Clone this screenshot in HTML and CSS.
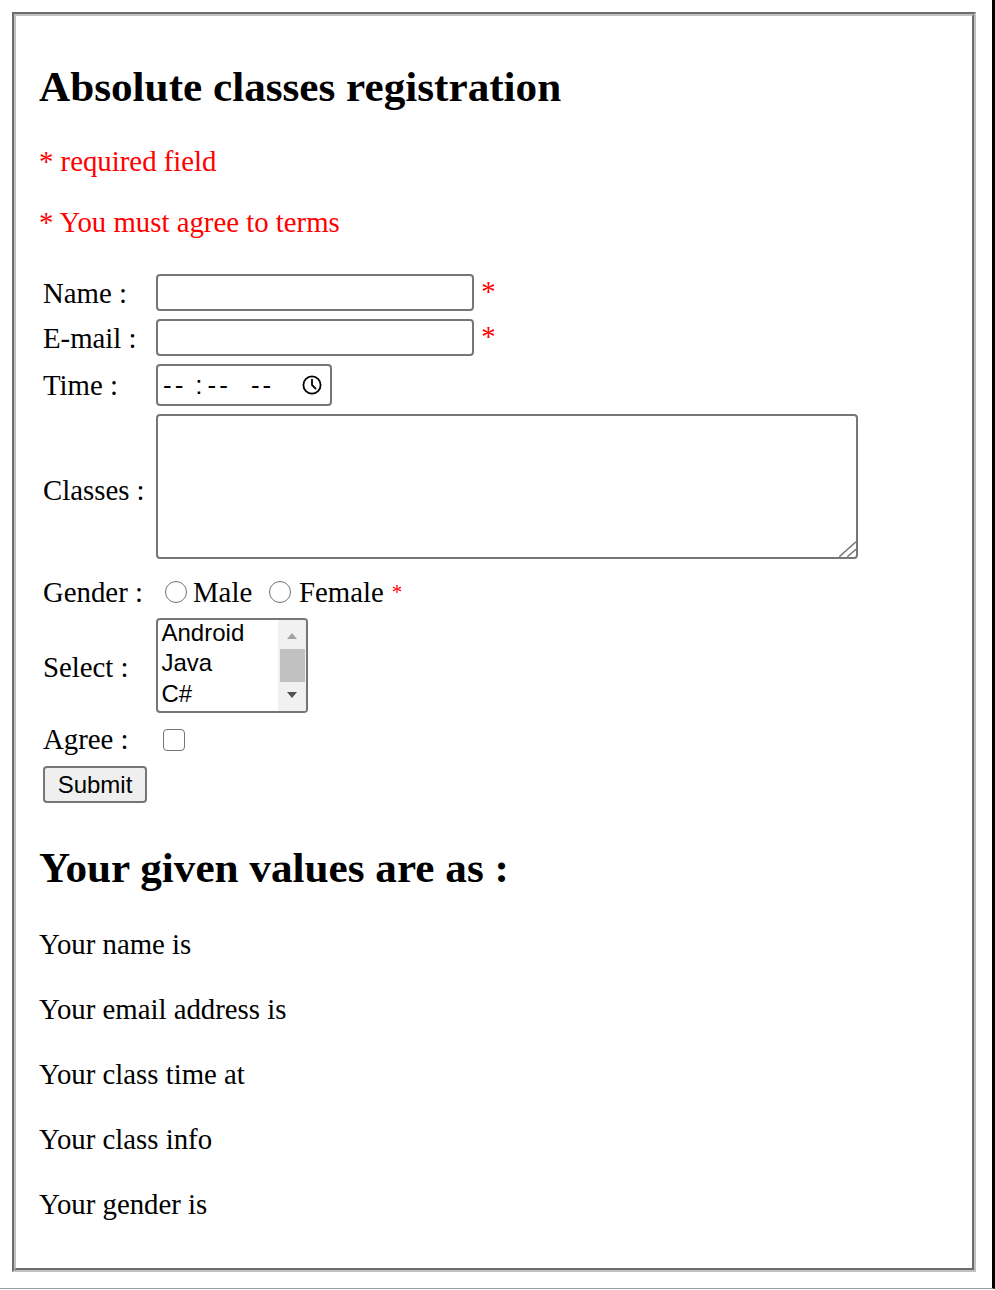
FILE: index.html
```html
<!DOCTYPE html>
<html lang="en">
<head>
<meta charset="utf-8">
<title>Absolute classes registration</title>
<link rel="stylesheet" href="styles.css">
</head>
<body>
<div class="frame">
  <div class="box">
    <h2 class="title">Absolute classes registration</h2>
    <p class="err note1">* required field</p>
    <p class="err note2">* You must agree to terms</p>

    <form class="form" onsubmit="return false">
      <div class="row">
        <label class="lbl">Name :</label>
        <div class="ctl"><input class="txt" type="text"> <span class="req">*</span></div>
      </div>
      <div class="row">
        <label class="lbl">E-mail :</label>
        <div class="ctl"><input class="txt" type="text"> <span class="req">*</span></div>
      </div>
      <div class="row">
        <label class="lbl">Time :</label>
        <div class="ctl">
          <div class="time">
            <span class="seg">--</span><span class="colon">:</span><span class="seg seg2">--</span><span class="seg seg3">--</span>
            <svg class="clock" width="20" height="20" viewBox="0 0 20 20" aria-hidden="true">
              <circle cx="10" cy="10" r="8.6" fill="none" stroke="#000" stroke-width="1.8"/>
              <path d="M10 4.6 V10 L13.6 13.6" fill="none" stroke="#000" stroke-width="1.8" stroke-linecap="round" stroke-linejoin="round"/>
            </svg>
          </div>
        </div>
      </div>
      <div class="row">
        <label class="lbl">Classes :</label>
        <div class="ctl tawrap">
          <textarea class="ta"></textarea>
          <svg class="grip" width="20" height="20" viewBox="0 0 20 20" aria-hidden="true">
            <path d="M18 2.7 L1.3 17.7 M18 10.3 L9.3 17.7" stroke="#707070" stroke-width="1.5" fill="none"/>
          </svg>
        </div>
      </div>
      <div class="row rowg">
        <label class="lbl">Gender :</label>
        <div class="ctl gender">
          <input class="radio r1" type="radio" name="g"><span>Male</span>
          <input class="radio r2" type="radio" name="g"><span>Female</span>
          <span class="req small">*</span>
        </div>
      </div>
      <div class="row">
        <label class="lbl">Select :</label>
        <div class="ctl">
          <div class="list">
            <div class="opts">
              <div class="opt">Android</div>
              <div class="opt">Java</div>
              <div class="opt">C#</div>
            </div>
            <div class="sb">
              <span class="up"></span>
              <span class="thumb"></span>
              <span class="down"></span>
            </div>
          </div>
        </div>
      </div>
      <div class="row">
        <label class="lbl">Agree :</label>
        <div class="ctl"><input class="chk" type="checkbox"></div>
      </div>
      <div class="row rows">
        <button class="submit" type="button">Submit</button>
      </div>
    </form>

    <h2 class="title title2">Your given values are as :</h2>
    <p class="out out1">Your name is</p>
    <p class="out">Your email address is</p>
    <p class="out">Your class time at</p>
    <p class="out">Your class info</p>
    <p class="out">Your gender is</p>
  </div>
</div>
</body>
</html>
```

FILE: styles.css
```css
html, body {
  margin: 0;
  padding: 0;
  background: #fff;
}

body {
  font-family: "Liberation Serif", "Times New Roman", serif;
  font-size: 28.8px;
  line-height: 32px;
  color: #000;
}

.frame {
  box-sizing: border-box;
  width: 995px;
  height: 1289px;
  padding: 12px 0 0 12px;
  border-right: 3px solid #000;
  border-bottom: 1px solid #999;
  overflow: hidden;
}

.box {
  box-sizing: border-box;
  width: 964px;
  border: 4px groove #c0c0c0;
  padding: 0 24px 48px 23px;
}

.title {
  margin: 47px 0 0;
  font-size: 43.2px;
  line-height: 48px;
  font-weight: bold;
}

.err {
  color: #f00;
  margin: 0;
}
.note1 { margin-top: 34px; }
.note2 { margin-top: 29px; }

.form {
  margin-top: 36px;
  padding-left: 4px;
  display: flex;
  flex-direction: column;
  gap: 8px;
}

.row {
  display: flex;
  align-items: center;
}

.lbl {
  flex: none;
  width: 113px;
}

.ctl {
  white-space: nowrap;
}

.req {
  color: #f00;
}
.req.small {
  font-size: 21px;
  margin-left: 8px;
}

.txt {
  box-sizing: border-box;
  width: 318px;
  height: 37px;
  margin: 0;
  padding: 0 3px;
  border: 2px solid #767676;
  border-radius: 4px;
  background: #fff;
  font-family: "Liberation Sans", Arial, sans-serif;
  font-size: 24px;
  vertical-align: baseline;
}

.time {
  box-sizing: border-box;
  display: flex;
  align-items: center;
  width: 176px;
  height: 42px;
  padding: 0 8px 0 5px;
  border: 2px solid #767676;
  border-radius: 4px;
  font-family: "Liberation Sans", Arial, sans-serif;
  font-size: 26px;
  line-height: normal;
}
.seg {
  letter-spacing: 3px;
}
.colon {
  margin-left: 9px;
}
.seg2 {
  margin-left: 5px;
}
.seg3 {
  margin-left: 20px;
}
.clock {
  margin-left: auto;
  display: block;
}

.tawrap {
  position: relative;
  margin-bottom: 6px;
}
.ta {
  display: block;
  box-sizing: border-box;
  width: 702px;
  height: 145px;
  margin: 0;
  border: 2px solid #767676;
  border-radius: 4px;
  resize: none;
  background: #fff;
}
.grip {
  position: absolute;
  right: 0;
  bottom: 0;
  display: block;
}

.rowg {
  height: 37px;
}
.gender {
  display: flex;
  align-items: center;
}
.radio {
  -webkit-appearance: none;
  appearance: none;
  box-sizing: border-box;
  width: 22px;
  height: 22px;
  margin: 0;
  border: 1.75px solid #767676;
  border-radius: 50%;
  background: #fff;
  flex: none;
}
.r1 { margin: 0 6px 0 9px; }
.r2 { margin: 0 8px 0 16.8px; }

.list {
  box-sizing: border-box;
  display: flex;
  width: 152px;
  height: 95px;
  margin-bottom: 2px;
  border: 2px solid #767676;
  border-radius: 4px;
  overflow: hidden;
  font-family: "Liberation Sans", Arial, sans-serif;
  font-size: 24px;
}
.opts {
  flex: 1;
  padding-left: 3.5px;
}
.opt {
  height: 30.33px;
  line-height: 26px;
}
.sb {
  flex: none;
  width: 28px;
  background: #f1f1f1;
  display: flex;
  flex-direction: column;
  align-items: center;
}
.up {
  margin-top: 13px;
  width: 0;
  height: 0;
  border-left: 5px solid transparent;
  border-right: 5px solid transparent;
  border-bottom: 6px solid #a3a3a3;
}
.thumb {
  margin-top: 10px;
  width: 25px;
  height: 33px;
  background: #c1c1c1;
}
.down {
  margin-top: 10px;
  width: 0;
  height: 0;
  border-left: 5px solid transparent;
  border-right: 5px solid transparent;
  border-top: 6px solid #505050;
}

.chk {
  -webkit-appearance: none;
  appearance: none;
  box-sizing: border-box;
  display: block;
  width: 22px;
  height: 22px;
  margin: 2px 0 0 7px;
  border: 1.75px solid #767676;
  border-radius: 4px;
  background: #fff;
}

.rows {
  margin-top: 3px;
}
.submit {
  box-sizing: border-box;
  width: 104px;
  height: 37px;
  margin: 0;
  padding: 0;
  border: 2px solid #767676;
  border-radius: 4px;
  background: #efefef;
  color: #000;
  font-family: "Liberation Sans", Arial, sans-serif;
  font-size: 24px;
  line-height: normal;
}

.title2 {
  margin-top: 41px;
}

.out {
  margin: 33px 0 0;
}
.out1 {
  margin-top: 36px;
}
```
